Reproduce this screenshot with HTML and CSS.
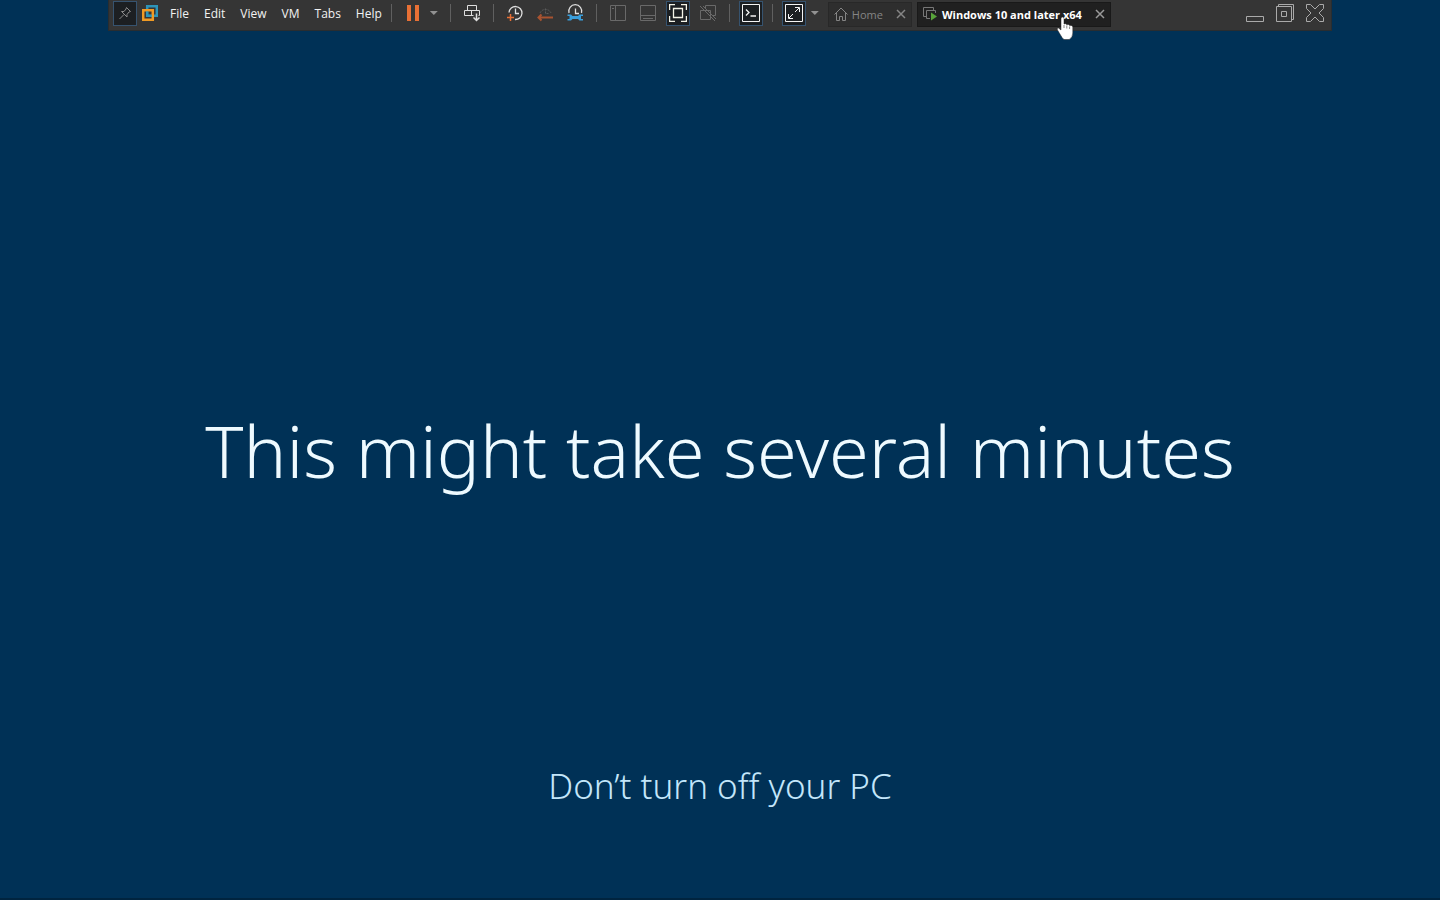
FILE: index.html
```
<!DOCTYPE html>
<html lang="en">
<head>
  <meta charset="UTF-8" />
  <meta name="viewport" content="width=device-width, initial-scale=1.0"/>
  <title>Windows 10 and later x64</title>
  <link rel="stylesheet" href="styles.css">
</head>
<body>

  <header class="toolbar">
    <button class="tool active" aria-label="Pin toolbar">
      <svg width="16" height="16" viewBox="0 0 16 16" fill="none" stroke="#8a8a8a"><path d="M9.500 2.500l4 4-1.500.5-2 2.500v2.500L4.500 6.500H7L9 4zM7 9.500L2.500 14"/></svg>
    </button>
    <svg class="logo" width="16" height="16" viewBox="0 0 16 16" fill="none" stroke-width="2.500"><path d="M5.200 10.800V1.200h9.600v9.600z" stroke="#2d94b8"/><path d="M1.200 5.200h9.600v9.600H1.200z" stroke="#f09a24"/><path d="M5.200 6.500v4.300h4.300" stroke="#2d94b8" stroke-width="2"/></svg>

    <nav class="menu">
      <button>File</button>
      <button>Edit</button>
      <button>View</button>
      <button>VM</button>
      <button>Tabs</button>
      <button>Help</button>
    </nav>

    <div class="group power">
      <button class="tool" aria-label="Suspend">
        <svg width="14" height="16" viewBox="0 0 14 16" fill="#e87035"><path d="M1 0h4v16H1zM9 0h4v16H9z"/></svg>
      </button>
      <button class="caret" aria-label="Power options"></button>
    </div>

    <div class="group">
      <button class="tool" aria-label="Send Ctrl+Alt+Del">
        <svg width="18" height="18" viewBox="0 0 18 18" fill="none" stroke="#dedede"><path d="M4.500 6.500v-5h9v5M10.500 11.500h-9v-5h15v5h-1M8.500 6.500v5"/><path d="M13.500 9.500v7M10.500 13.500l3 3 3-3" stroke-width="1.500"/></svg>
      </button>
    </div>

    <div class="group spaced">
      <button class="tool" aria-label="Take snapshot">
        <svg width="18" height="18" viewBox="0 0 18 18" fill="none"><path d="M3 8.500A6.500 6.500 0 1 1 9 15.500M9.500 4.500v5H13" stroke="#dedede" stroke-width="1.300"/><path d="M4.500 10v7M1 13.500h7" stroke="#e87035" stroke-width="1.500"/></svg>
      </button>
      <button class="tool" aria-label="Revert snapshot">
        <svg width="18" height="18" viewBox="0 0 18 18" fill="none"><path d="M4 9A6 6 0 0 1 15 9M9.500 4.500v5H13" stroke="#5a5a5a" stroke-dasharray="2 1"/><path d="M17 13.500H3M5.500 10.500l-3 3 3 3" stroke="#a85330" stroke-width="2"/></svg>
      </button>
      <button class="tool" aria-label="Manage snapshots">
        <svg width="18" height="18" viewBox="0 0 18 18" fill="none"><path d="M3 9A6.500 6.500 0 1 1 15.500 9M9.500 4.500v5H13" stroke="#dedede" stroke-width="1.300"/><path d="M1.500 10.500H5L6.500 12H12l1.500-1.500h3.500V12h-2v3h2v1.500h-3.500L12 15H6.500L5 16.500H1.500V15h2v-3h-2z" fill="#399edb"/></svg>
      </button>
    </div>

    <div class="group spaced">
      <button class="tool" aria-label="Show library">
        <svg width="16" height="16" viewBox="0 0 16 16" fill="none" stroke="#696969"><path d="M.5.5h15v15H.5zM5.500.5v15M2 3.500h2"/></svg>
      </button>
      <button class="tool" aria-label="Show thumbnail bar">
        <svg width="16" height="16" viewBox="0 0 16 16" fill="none" stroke="#696969"><path d="M.5.5h15v15H.5zM.5 10.500h15M3 13.500h10"/></svg>
      </button>
      <button class="tool active" aria-label="Full screen">
        <svg width="18" height="18" viewBox="0 0 18 18" fill="none" stroke="#f4f4e8" stroke-width="1.300"><path d="M.6 6V.6H6M12 .6h5.400V6M17.400 12v5.400H12M6 17.400H.6V12M4.500 4.500h9v9h-9z"/></svg>
      </button>
      <button class="tool" aria-label="Unity">
        <svg width="18" height="18" viewBox="0 0 18 18" fill="none" stroke="#696969"><path d="M6.500 4V1.500h10v10H13M1.500 6.500h10v9h-10zM1 2l15 15M4 2l13 13"/></svg>
      </button>
    </div>

    <div class="group">
      <button class="tool active" aria-label="Console view">
        <svg width="18" height="18" viewBox="0 0 18 18" fill="none" stroke="#f4f4f4"><path d="M.5.5h17v17H.5z"/><path d="M4 5.500l3 3-3 3M8.500 12H14" stroke-width="1.300"/></svg>
      </button>
    </div>

    <div class="group">
      <button class="tool active" aria-label="Stretch guest">
        <svg width="18" height="18" viewBox="0 0 18 18" fill="none" stroke="#f4f4f4"><path d="M.5.5h17v17H.5z"/><path d="M10 3.500h4.500V8M14 4l-4 4M3.500 10v4.500H8M4 14l4-4"/></svg>
      </button>
      <button class="caret" aria-label="Stretch options"></button>
    </div>

    <div class="tabs">
      <div class="tab">
        <svg width="14" height="14" viewBox="0 0 14 14" fill="none" stroke="#858585"><path d="M.5 7.500L7 1l6.500 6.500M2.500 6v7.500h3v-4h3v4h3V6"/></svg>
        <a href="#home">Home</a>
        <button class="tab-close" aria-label="Close Home"><svg width="10" height="10" viewBox="0 0 10 10" stroke="#858585" stroke-width="1.500"><path d="M1 1l8 8M9 1L1 9"/></svg></button>
      </div>
      <div class="tab current">
        <svg width="15" height="14" viewBox="0 0 15 14" fill="none" stroke="#777"><path d="M3 9.500H.5v-9h10V3M7 11.500H3.500v-8h9V6"/><path d="M8 5.500v8l6-4z" fill="#58a33a" stroke="none"/></svg>
        <a href="#vm">Windows 10 and later x64</a>
        <button class="tab-close" aria-label="Close Windows 10"><svg width="10" height="10" viewBox="0 0 10 10" stroke="#9a9a9a" stroke-width="1.500"><path d="M1 1l8 8M9 1L1 9"/></svg></button>
        <svg class="cursor" width="18" height="24" viewBox="0 0 18 24"><path d="M5 2.500Q5 1 6.500 1T8 2.500V8q2-1 2.800.8 2-1 2.800.8 3-.8 3.200 1.400v6q0 4-3.500 6.500H8q-2-1.500-3.500-4.500L1.500 14q-1-2 1-2L5 14z" fill="#fff" stroke="#222" stroke-width=".5"/><path d="M8 9v3M10.800 9.500v3M13.600 10.500V13" stroke="#555" stroke-width=".7"/></svg>
      </div>
    </div>

    <div class="window-buttons">
      <button aria-label="Minimize"><svg width="20" height="20" viewBox="0 0 20 20" fill="none" stroke="#aaa"><path d="M1.500 13.500h17v5h-17z"/></svg></button>
      <button aria-label="Restore"><svg width="20" height="20" viewBox="0 0 20 20" fill="none" stroke="#aaa"><path d="M3.500 3.500v-2h15v15h-2M1.500 3.500h15v15h-15zM6.500 8.500h5v5h-5z"/></svg></button>
      <button aria-label="Close"><svg width="20" height="20" viewBox="0 0 20 20" fill="none" stroke="#aaa"><path d="M1.500 1.500h4L10 6l4.500-4.500h4v4L14 10l4.500 4.500v4h-4L10 14l-4.500 4.500h-4v-4L6 10 1.500 5.500z"/></svg></button>
    </div>
  </header>

  <main class="screen">
    <h1>This might take several minutes</h1>
    <p>Don’t turn off your PC</p>
  </main>

</body>
</html>
```
FILE: styles.css
```
* {
  box-sizing: border-box;
}

body {
  display: flex;
  flex-direction: column;
  min-height: 100vh;
  margin: 0;
  background-color: #003156;
  border-bottom: 2px solid #00243f;
  font-family: "Open Sans", "Noto Sans", sans-serif;
  font-size: 12px;
}

button {
  padding: 0;
  border: none;
  background: none;
  color: inherit;
  font: inherit;
}

svg {
  display: block;
  flex: none;
}

.toolbar {
  display: flex;
  align-items: center;
  width: 85%;
  height: 31px;
  margin: 0 auto;
  padding: 0 6px 4px 4px;
  background-color: #353535;
  border: 1px solid #292d30;
  border-top: none;
  color: #f2f2f2;
}

.tool {
  display: flex;
  align-items: center;
  justify-content: center;
  flex: none;
  width: 24px;
  height: 25px;
}

.tool.active {
  background-color: #1c1f22;
  border: 1px solid #36536f;
}

.logo {
  margin: 0 4px 0 5px;
}

.menu {
  display: flex;
  margin-right: 2px;
}

.menu button {
  padding: 0 7px 0 8px;
}

.group {
  display: flex;
  align-items: center;
  padding: 0 9px;
  border-left: 1px solid transparent;
  background: linear-gradient(#606060, #606060) left center / 1px 18px no-repeat;
  background-origin: border-box;
}

.group.spaced {
  gap: 6px;
}

.caret {
  width: 8px;
  height: 4px;
  margin-left: 5px;
  background-color: #929292;
  clip-path: polygon(0 0, 100% 0, 50% 100%);
}

.power {
  padding-right: 12px;
}

.tabs {
  display: flex;
  gap: 5px;
  padding-top: 2px;
}

.tab {
  display: flex;
  align-items: center;
  position: relative;
  gap: 4px;
  height: 25px;
  padding: 0 5px;
  background-color: #2e2e2e;
  border: 1px solid #282828;
  color: #858585;
  font-size: 11px;
}

.tab.current {
  background-color: #202020;
  border-color: #191919;
  color: #fff;
  font-weight: bold;
}

.tab a {
  color: inherit;
  text-decoration: none;
  white-space: nowrap;
}

.tab-close {
  margin-left: 9px;
}

.cursor {
  position: absolute;
  top: 13px;
  right: 36px;
}

.window-buttons {
  display: flex;
  gap: 10px;
  margin-left: auto;
}

.screen {
  display: flex;
  flex: 1;
  flex-direction: column;
  align-items: center;
  justify-content: space-between;
  padding: 42vh 20px 10vh;
  font-family: "Noto Sans", "Open Sans", sans-serif;
  font-weight: 300;
  text-align: center;
}

h1 {
  margin: 0;
  color: #eefaff;
  font-size: 72px;
  font-weight: 300;
  line-height: 82px;
}

p {
  margin: 0;
  color: #c3e6fa;
  font-size: 35px;
  line-height: 44px;
}
```
